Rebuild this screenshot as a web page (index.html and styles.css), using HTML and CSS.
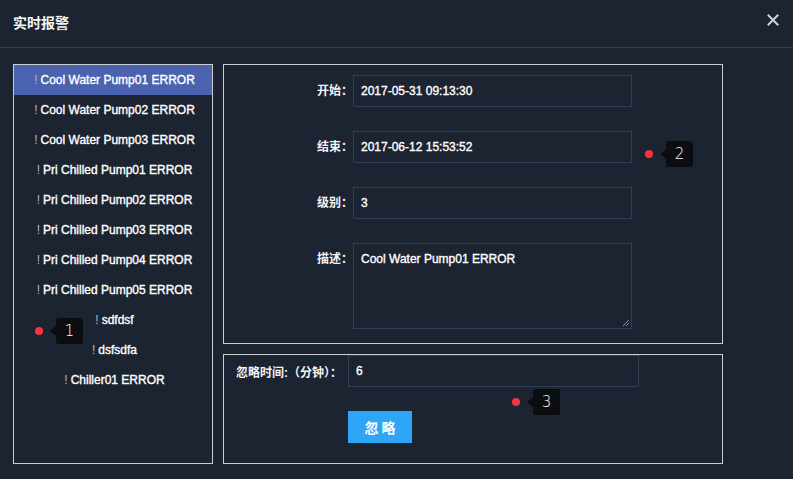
FILE: index.html
```html
<!DOCTYPE html>
<html lang="zh">
<head>
<meta charset="utf-8">
<title>实时报警</title>
<link rel="stylesheet" href="styles.css">
</head>
<body>
<div class="dialog">
  <header class="dialog-hd">
    <h1 class="dialog-title">实时报警</h1>
    <button class="close-btn" aria-label="关闭">
      <svg width="12" height="12" viewBox="0 0 12 12"><path d="M1.5 1.5 L10.5 10.5 M10.5 1.5 L1.5 10.5" stroke="#cdd1d7" stroke-width="2" stroke-linecap="square" fill="none"/></svg>
    </button>
  </header>
  <div class="dialog-bd">
    <ul class="alarm-list">
      <li class="alarm-item is-active"><span class="bang">!</span>Cool Water Pump01 ERROR</li>
      <li class="alarm-item"><span class="bang">!</span>Cool Water Pump02 ERROR</li>
      <li class="alarm-item"><span class="bang">!</span>Cool Water Pump03 ERROR</li>
      <li class="alarm-item"><span class="bang">!</span>Pri Chilled Pump01 ERROR</li>
      <li class="alarm-item"><span class="bang">!</span>Pri Chilled Pump02 ERROR</li>
      <li class="alarm-item"><span class="bang">!</span>Pri Chilled Pump03 ERROR</li>
      <li class="alarm-item"><span class="bang">!</span>Pri Chilled Pump04 ERROR</li>
      <li class="alarm-item"><span class="bang">!</span>Pri Chilled Pump05 ERROR</li>
      <li class="alarm-item"><span class="bang">!</span>sdfdsf</li>
      <li class="alarm-item"><span class="bang">!</span>dsfsdfa</li>
      <li class="alarm-item"><span class="bang">!</span>Chiller01 ERROR</li>
    </ul>
    <div class="detail">
      <section class="card detail-form">
        <label class="f-label">开始：</label>
        <div class="f-input">2017-05-31 09:13:30</div>
        <label class="f-label">结束：</label>
        <div class="f-input">2017-06-12 15:53:52</div>
        <label class="f-label">级别：</label>
        <div class="f-input">3</div>
        <label class="f-label">描述：</label>
        <div class="f-input f-textarea">Cool Water Pump01 ERROR<span class="grip"></span></div>
      </section>
      <section class="card ignore-form">
        <div class="ignore-row">
          <label class="ig-label">忽略时间:（分钟）：</label>
          <div class="f-input ig-input">6</div>
        </div>
        <button class="ig-btn">忽 略</button>
      </section>
    </div>
  </div>

  <div class="marker m1"><span class="dot"></span><span class="tip">1</span></div>
  <div class="marker m2"><span class="dot"></span><span class="tip">2</span></div>
  <div class="marker m3"><span class="dot"></span><span class="tip">3</span></div>
</div>
</body>
</html>
```

FILE: styles.css
```css
* { box-sizing: border-box; }
html, body { margin: 0; padding: 0; }
body {
  background: #1c2431;
  color: #fff;
  font-family: "Liberation Sans", "Noto Sans CJK SC", sans-serif;
  font-size: 12px;
  width: 793px;
  height: 479px;
  overflow: hidden;
}
.dialog { position: relative; width: 793px; height: 479px; }

.dialog-hd {
  height: 48px;
  border-bottom: 1px solid #37404d;
  display: flex;
  align-items: center;
  justify-content: space-between;
  padding: 0 13px;
}
.dialog-title {
  margin: 0;
  font-size: 14px;
  font-weight: 700;
  line-height: 47px;
  color: #f4f5f7;
}
.close-btn {
  background: none;
  border: 0;
  padding: 0;
  width: 12px;
  height: 12px;
  margin-top: -7px;
  margin-right: 1px;
  display: flex;
}

.dialog-bd {
  display: flex;
  gap: 10px;
  padding: 16px 0 0 13px;
}

.alarm-list {
  list-style: none;
  margin: 0;
  padding: 0;
  width: 200px;
  height: 400px;
  border: 1px solid #cbcdd0;
}
.alarm-item {
  height: 30px;
  line-height: 30px;
  text-align: center;
  padding-left: 3px;
  white-space: nowrap;
  color: #fff;
  -webkit-text-stroke: 0.35px #fff;
}
.alarm-item.is-active { background: #4b63ae; }
.bang {
  color: #b4b8be;
  -webkit-text-stroke: 0;
  margin-right: 3px;
  font-size: 12px;
}

.detail {
  display: flex;
  flex-direction: column;
  gap: 10px;
  width: 500px;
}
.card { border: 1px solid #cbcdd0; }

.detail-form {
  height: 280px;
  padding-top: 10px;
  display: grid;
  grid-template-columns: 129px 279px;
  grid-auto-rows: min-content;
  row-gap: 24px;
  align-content: start;
}
.f-label {
  text-align: right;
  line-height: 32px;
  font-weight: 700;
  color: #f2f3f5;
  white-space: nowrap;
}
.f-input {
  height: 32px;
  line-height: 30px;
  border: 1px solid #323e53;
  padding: 0 7px;
  color: #fff;
  -webkit-text-stroke: 0.35px #fff;
  white-space: nowrap;
}
.f-textarea {
  position: relative;
  height: 86px;
  line-height: 16px;
  padding-top: 7px;
}
.grip {
  position: absolute;
  right: 2px;
  bottom: 2px;
  width: 6px;
  height: 6px;
  background: linear-gradient(135deg, transparent 45%, #8a9099 45%, #8a9099 55%, transparent 55%, transparent 70%, #8a9099 70%, #8a9099 80%, transparent 80%);
}

.ignore-form { height: 110px; }
.ignore-row { display: flex; align-items: center; }
.ig-label {
  width: 124px;
  padding-left: 12px;
  font-weight: 700;
  color: #f2f3f5;
  white-space: nowrap;
}
.ig-input { width: 291px; }
.ig-btn {
  display: block;
  margin: 24px 0 0 124px;
  width: 64px;
  height: 32px;
  border: 0;
  background: #2fa5f6;
  color: #fff;
  font-family: "Noto Sans CJK SC", sans-serif;
  font-size: 14px;
  font-weight: 700;
  padding: 0;
}

.marker {
  position: absolute;
  display: flex;
  align-items: center;
}
.dot {
  width: 8px;
  height: 8px;
  border-radius: 50%;
  background: #fa3340;
  margin-right: 7px;
}
.tip {
  position: relative;
  width: 27px;
  height: 26px;
  border-radius: 3px;
  background: #0b0d11;
  color: #fff;
  font-family: "DejaVu Sans", sans-serif;
  font-weight: 200;
  font-size: 15px;
  line-height: 27px;
  text-align: center;
  margin-left: 6px;
}
.tip::before {
  content: "";
  position: absolute;
  left: -6px;
  top: 50%;
  margin-top: -5px;
  border-style: solid;
  border-width: 5px 6px 5px 0;
  border-color: transparent #0b0d11 transparent transparent;
}
.m1 { left: 35px; top: 318px; }
.m2 { left: 645px; top: 141px; }
.m3 { left: 512px; top: 389px; }
```
